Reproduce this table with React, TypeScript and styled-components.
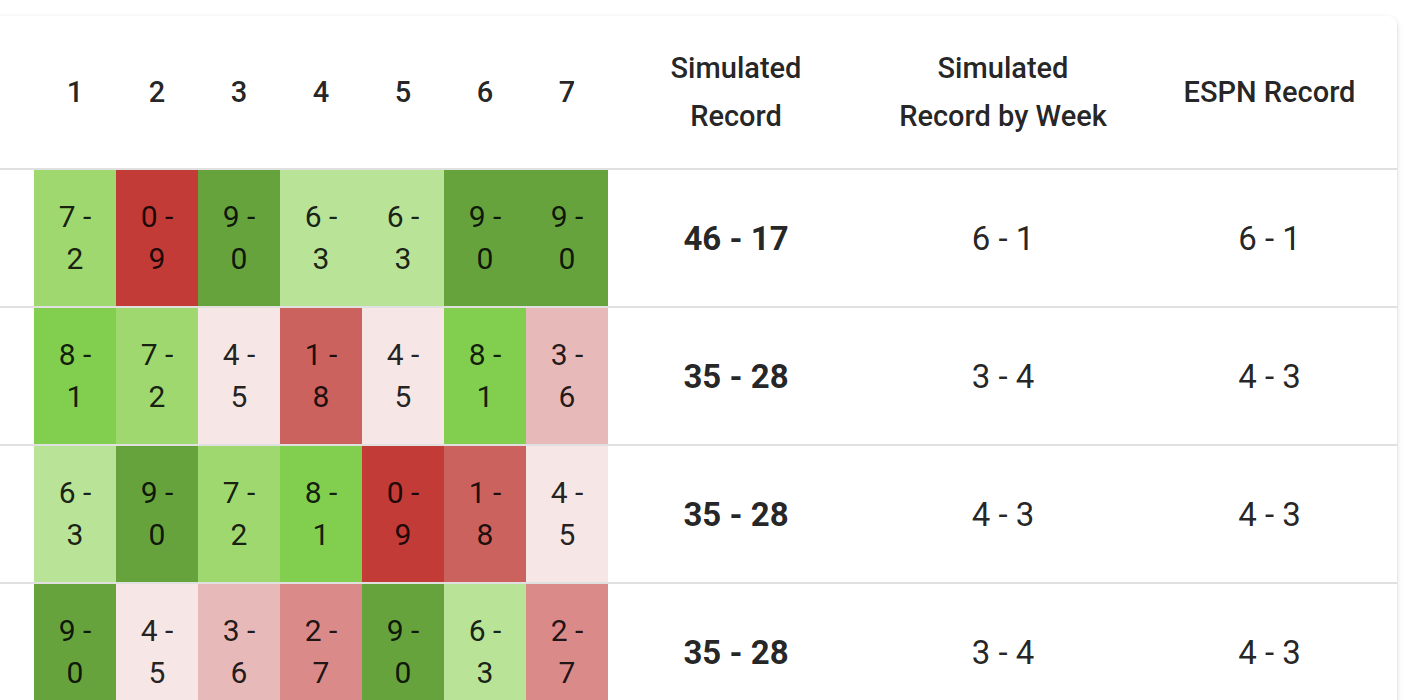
import styled, { createGlobalStyle } from 'styled-components'

const GlobalStyle = createGlobalStyle`
    html, body {
        margin: 0;
        padding: 0;
        background: #fff;
        overflow: hidden;
    }
    body {
        font-family: Roboto, "Liberation Sans", sans-serif;
        color: rgba(0, 0, 0, 0.87);
    }
`

type Result = [number, number]

interface TeamRow {
    weeks: Result[]
    simulated: string
    byWeek: string
    espn: string
}

const rows: TeamRow[] = [
    { weeks: [[7, 2], [0, 9], [9, 0], [6, 3], [6, 3], [9, 0], [9, 0]], simulated: '46 - 17', byWeek: '6 - 1', espn: '6 - 1' },
    { weeks: [[8, 1], [7, 2], [4, 5], [1, 8], [4, 5], [8, 1], [3, 6]], simulated: '35 - 28', byWeek: '3 - 4', espn: '4 - 3' },
    { weeks: [[6, 3], [9, 0], [7, 2], [8, 1], [0, 9], [1, 8], [4, 5]], simulated: '35 - 28', byWeek: '4 - 3', espn: '4 - 3' },
    { weeks: [[9, 0], [4, 5], [3, 6], [2, 7], [9, 0], [6, 3], [2, 7]], simulated: '35 - 28', byWeek: '3 - 4', espn: '4 - 3' },
]

// colour scale by number of simulated wins (out of 9)
const winColors: Record<number, string> = {
    0: '#c23b37',
    1: '#cc625e',
    2: '#d98a89',
    3: '#e8b9b9',
    4: '#f6e6e6',
    5: '#dcefcf',
    6: '#b9e498',
    7: '#a0d870',
    8: '#82cf4f',
    9: '#66a33c',
}

const App = () => {
    return (
        <Page>
            <GlobalStyle />
            <Card>
                <Table>
                    <colgroup>
                        <col style={{ width: 44 }} />
                        {[1, 2, 3, 4, 5, 6, 7].map(w => <col key={w} style={{ width: 82 }} />)}
                        <col style={{ width: 256 }} />
                        <col style={{ width: 278 }} />
                        <col style={{ width: 255 }} />
                    </colgroup>
                    <thead>
                        <tr>
                            <HeadCell />
                            {[1, 2, 3, 4, 5, 6, 7].map(w => (
                                <HeadCell key={w}>{w}</HeadCell>
                            ))}
                            <HeadCell>Simulated<br />Record</HeadCell>
                            <HeadCell>Simulated<br />Record by Week</HeadCell>
                            <HeadCell>ESPN Record</HeadCell>
                        </tr>
                    </thead>
                    <tbody>
                        {rows.map((row, i) => (
                            <tr key={i}>
                                <BodyCell />
                                {row.weeks.map(([w, l], j) => (
                                    <WeekCell key={j} $bg={winColors[w]}>
                                        <span>{w} -</span>
                                        <span>{l}</span>
                                    </WeekCell>
                                ))}
                                <BodyCell $bold>{row.simulated}</BodyCell>
                                <BodyCell>{row.byWeek}</BodyCell>
                                <BodyCell>{row.espn}</BodyCell>
                            </tr>
                        ))}
                    </tbody>
                </Table>
            </Card>
        </Page>
    )
}

export default App

const Page = styled.div`
    padding-top: 16px;
    width: 1426px;
`

const Card = styled.div`
    margin-left: -10px;
    width: 1407px;
    background: #fff;
    border-radius: 9px;
    overflow: hidden;
    box-shadow: 0px 3px 2px -2px rgba(0, 0, 0, 0.2),
        0px 2px 2px 0px rgba(0, 0, 0, 0.14),
        0px 2px 6px 0px rgba(0, 0, 0, 0.12);
`

const Table = styled.table`
    width: 100%;
    table-layout: fixed;
    border-collapse: collapse;
    border-spacing: 0;
`

const HeadCell = styled.th`
    height: 152px;
    padding: 0;
    text-align: center;
    vertical-align: middle;
    font-size: 29px;
    font-weight: 500;
    line-height: 48px;
    color: rgba(0, 0, 0, 0.87);
    border-bottom: 2px solid #e0e0e0;
`

const BodyCell = styled.td<{ $bold?: boolean }>`
    height: 136px;
    padding: 0;
    text-align: center;
    vertical-align: middle;
    font-size: 33px;
    font-weight: ${p => (p.$bold ? 700 : 400)};
    color: rgba(0, 0, 0, 0.87);
    border-bottom: 2px solid #e0e0e0;
`

const WeekCell = styled.td<{ $bg: string }>`
    height: 136px;
    padding: 0;
    text-align: center;
    vertical-align: middle;
    background: ${p => p.$bg};
    font-size: 30px;
    line-height: 42px;
    color: rgba(0, 0, 0, 0.87);
    border-bottom: 2px solid #e0e0e0;

    span {
        display: block;
    }
`
